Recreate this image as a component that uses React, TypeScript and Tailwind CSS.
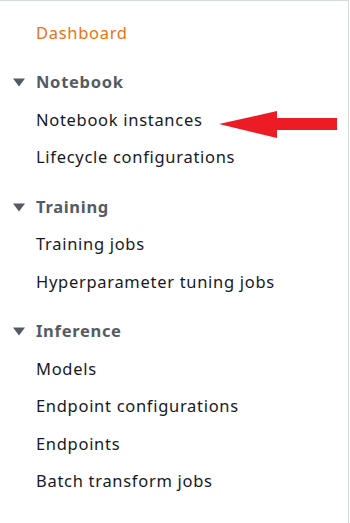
const sections = [
  {
    title: "Notebook",
    items: ["Notebook instances", "Lifecycle configurations"],
  },
  {
    title: "Training",
    items: ["Training jobs", "Hyperparameter tuning jobs"],
  },
  {
    title: "Inference",
    items: [
      "Models",
      "Endpoint configurations",
      "Endpoints",
      "Batch transform jobs",
    ],
  },
];

function Caret() {
  return (
    <svg width="12" height="9" viewBox="0 0 12 9" className="shrink-0">
      <path d="M0 0.5 H12 L6 8.5 Z" fill="#545b64" />
    </svg>
  );
}

function RedArrow() {
  return (
    <svg
      width="120"
      height="28"
      viewBox="0 0 120 28"
      className="absolute left-[219px] top-[9px]"
    >
      <path d="M0 13 L58 0 V7 H118 V19 H58 V27 Z" fill="#ec1c24" />
    </svg>
  );
}

export default function App() {
  return (
    <div className="w-[349px] h-[523px] bg-white border-t border-r border-[#d5dbdb] font-['Noto_Sans',sans-serif] text-[16.5px] tracking-[0.7px] pt-[13.5px]">
      <div className="h-[37.5px] flex items-center pl-[36px] text-[#ec7211]">
        Dashboard
      </div>
      {sections.map((s) => (
        <div key={s.title} className="mt-[12px]">
          <div className="h-[37.5px] flex items-center gap-[11px] pl-[13px] font-bold text-[#545b64]">
            <Caret />
            <span>{s.title}</span>
          </div>
          {s.items.map((item) => (
            <div
              key={item}
              className="relative h-[37.5px] flex items-center pl-[36px] text-[#16191f]"
            >
              <span>{item}</span>
              {item === "Notebook instances" && <RedArrow />}
            </div>
          ))}
        </div>
      ))}
    </div>
  );
}
